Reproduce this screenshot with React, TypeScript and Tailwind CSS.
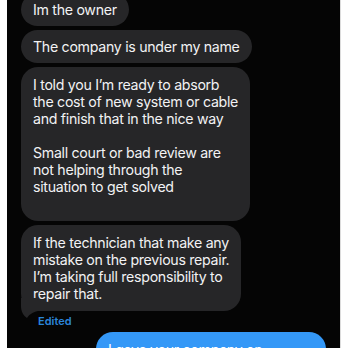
import React from 'react';

const incoming: { text: string[]; tail?: boolean }[] = [
  { text: ['Im the owner'] },
  { text: ['The company is under my name'] },
  {
    text: [
      'I told you I’m ready to absorb',
      'the cost of new system or cable',
      'and finish that in the nice way',
      '',
      'Small court or bad review are',
      'not helping through the',
      'situation to get solved',
      '',
    ],
  },
  {
    text: [
      'If the technician that make any',
      'mistake on the previous repair.',
      'I’m taking full responsibility to',
      'repair that.',
    ],
    tail: true,
  },
];

function Bubble({ lines, tail }: { lines: string[]; tail?: boolean }) {
  const single = lines.length === 1;
  return (
    <div
      className={`relative self-start bg-[#262628] text-[#f2f2f4] px-3 ${
        single ? 'rounded-full py-[8px]' : 'rounded-[17px] py-[9px]'
      }`}
    >
      {lines.map((l, i) => (
        <div key={i} className="h-[17px] leading-[17px] whitespace-pre">
          {l || ' '}
        </div>
      ))}
      {tail && (
        <svg
          className="absolute left-0 bottom-[-7px]"
          width="18"
          height="20"
          viewBox="0 0 18 20"
        >
          <path d="M0 0 V8 C0 14 2.5 17.5 6 20 C8 17 11 14.5 17 13 V0 Z" fill="#262628" />
        </svg>
      )}
    </div>
  );
}

export default function App() {
  return (
    <div className="w-[348px] h-[348px] overflow-hidden bg-white flex">
      <div
        className="ml-[7px] w-[334px] h-full bg-[#050505] border-r border-[#dcdcdc] flex flex-col px-[14px] text-[14.2px] tracking-[-0.3px] overflow-hidden"
        style={{ fontFamily: 'Inter, "Liberation Sans", sans-serif' }}
      >
        <div className="flex flex-col gap-[4px] -mt-[7px]">
          {incoming.map((m, i) => (
            <Bubble key={i} lines={m.text} tail={m.tail} />
          ))}
        </div>
        <div className="mt-[4px] ml-[17px] text-[11px] font-semibold text-[#2b85da] leading-[12px] tracking-normal">
          Edited
        </div>
        <div className="mt-[5px] self-end w-[230px] bg-[#3498f7] text-white rounded-[17px] px-3 pt-[9px] pb-[9px]">
          <div className="leading-[17px]">I gave your company on</div>
          <div className="leading-[17px]">multiple chances</div>
        </div>
      </div>
    </div>
  );
}
